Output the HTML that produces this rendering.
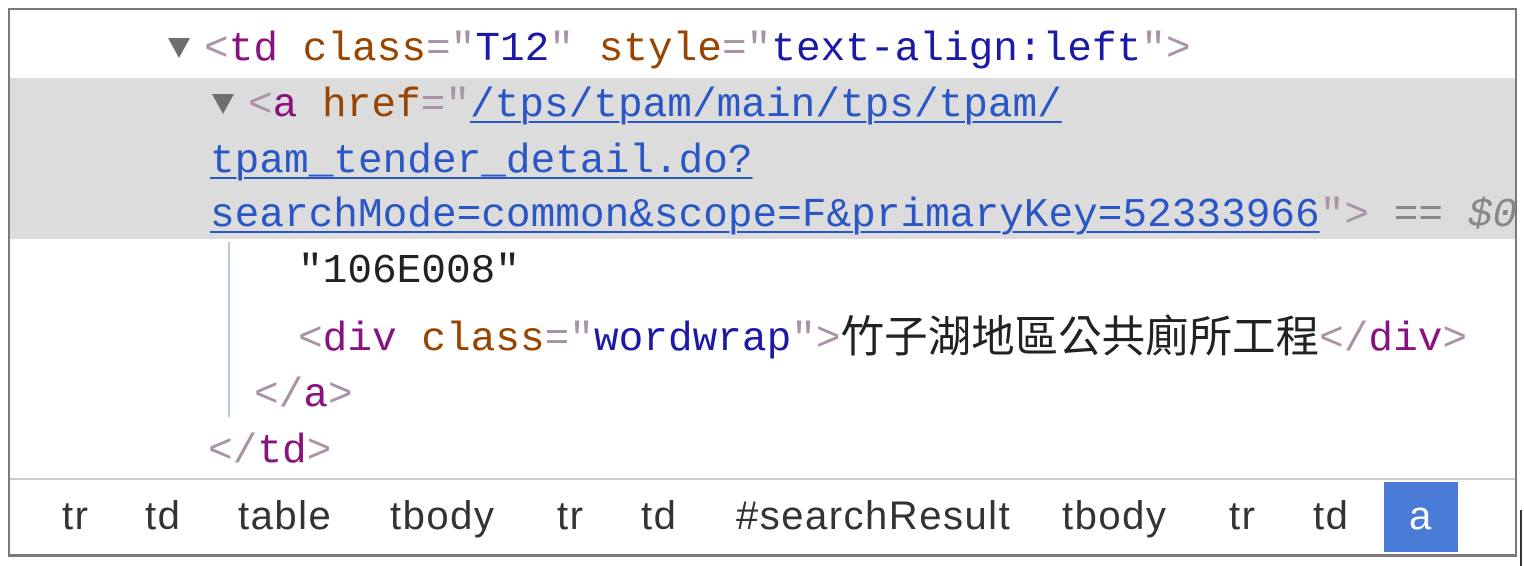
<!DOCTYPE html>
<html><head><meta charset="utf-8"><style>
html,body{margin:0;padding:0;background:#fff;width:1524px;height:566px;overflow:hidden;position:relative}
.frame{position:absolute;left:8px;top:8px;width:1505px;height:544px;border:2px solid #7a7a7a;border-bottom-width:3px;overflow:hidden;background:#fff}
.l{position:absolute;white-space:pre;font-family:"Liberation Mono","Noto Sans CJK TC",monospace;font-size:41.1px;line-height:56px;color:#222}
.t{color:#881280}.a{color:#994500}.v{color:#1a1aa6}.b{color:#a894a6}
.u{color:#2a56c6;text-decoration:underline;text-decoration-thickness:2px;text-underline-offset:5px}
.hl{position:absolute;left:0;top:68px;width:100%;height:161px;background:#dcdcdc}
.tri{position:absolute;width:0;height:0;border-left:11px solid transparent;border-right:11px solid transparent;border-top:20px solid #6e6e6e}
.cn{font-family:"Noto Sans CJK TC","Liberation Sans",sans-serif;font-size:43.5px;vertical-align:-2px}
.bar{position:absolute;left:0;top:468px;width:100%;height:80px;border-top:2px solid #ccc;background:#fff}
.bi{position:absolute;top:6px;font-family:"Liberation Sans",sans-serif;font-size:40px;letter-spacing:1.5px;line-height:60px;color:#333}
</style></head><body>
<div class="frame">
<div class="hl"></div>
<div class="tri" style="left:158px;top:28px"></div>
<div class="tri" style="left:202px;top:84px"></div>
<div class="l" style="left:194px;top:12px"><span class="b">&lt;</span><span class="t">td</span> <span class="a">class</span><span class="b">="</span><span class="v">T12</span><span class="b">"</span> <span class="a">style</span><span class="b">="</span><span class="v">text-align:left</span><span class="b">"&gt;</span></div>
<div class="l" style="left:238px;top:68px"><span class="b">&lt;</span><span class="t">a</span> <span class="a">href</span><span class="b">="</span><span class="u">/tps/tpam/main/tps/tpam/</span></div>
<div class="l" style="left:200px;top:124px"><span class="u">tpam_tender_detail.do?</span></div>
<div class="l" style="left:200px;top:178px"><span class="u">searchMode=common&amp;scope=F&amp;primaryKey=52333966</span><span class="b">"&gt;</span> <span style="color:#888">== <i>$0</i></span></div>
<div style="position:absolute;left:218px;top:232px;width:2px;height:175px;background:#b8c6e6"></div>
<div class="l" style="left:288px;top:234px">"106E008"</div>
<div class="l" style="left:288px;top:296px"><span class="b">&lt;</span><span class="t">div</span> <span class="a">class</span><span class="b">="</span><span class="v">wordwrap</span><span class="b">"&gt;</span><span class="cn">竹子湖地區公共廁所工程</span><span class="b">&lt;/</span><span class="t">div</span><span class="b">&gt;</span></div>
<div class="l" style="left:244px;top:358px"><span class="b">&lt;/</span><span class="t">a</span><span class="b">&gt;</span></div>
<div class="l" style="left:198px;top:414px"><span class="b">&lt;/</span><span class="t">td</span><span class="b">&gt;</span></div>
<div class="bar">
<span class="bi" style="left:52px">tr</span>
<span class="bi" style="left:135px">td</span>
<span class="bi" style="left:228px">table</span>
<span class="bi" style="left:380px">tbody</span>
<span class="bi" style="left:547px">tr</span>
<span class="bi" style="left:631px">td</span>
<span class="bi" style="left:726px">#searchResult</span>
<span class="bi" style="left:1052px">tbody</span>
<span class="bi" style="left:1219px">tr</span>
<span class="bi" style="left:1303px">td</span>
<div style="position:absolute;left:1374px;top:2px;width:74px;height:70px;background:#4a7bd6"></div>
<span class="bi" style="left:1399px;color:#fff">a</span>
</div>
</div>
<div style="position:absolute;left:1520px;top:510px;width:2px;height:56px;background:#333"></div>
</body></html>
